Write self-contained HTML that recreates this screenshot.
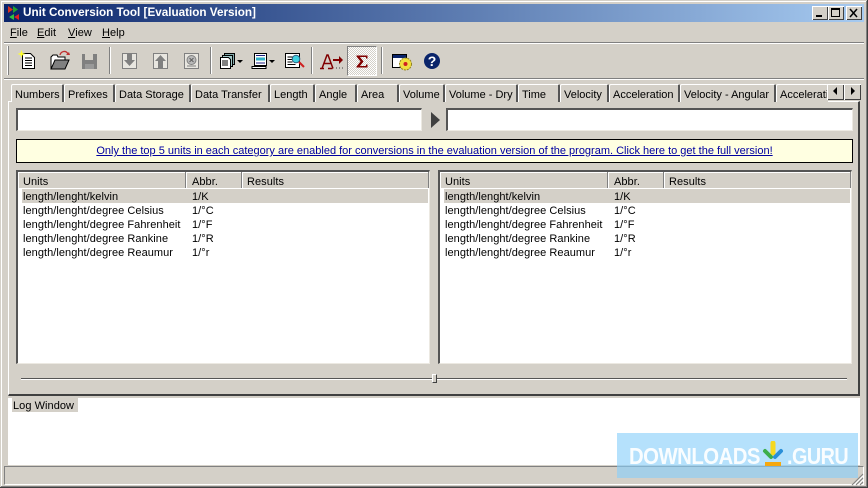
<!DOCTYPE html>
<html><head><meta charset="utf-8">
<style>
html,body{margin:0;padding:0;}
body{width:868px;height:488px;overflow:hidden;position:relative;background:#d4d0c8;font-family:"Liberation Sans",sans-serif;font-size:11px;color:#000;}
.a{position:absolute;}
.t{position:absolute;white-space:nowrap;line-height:14px;font-family:"Liberation Sans",sans-serif;font-size:11px;margin-top:1px;letter-spacing:.05px;}
.tab{position:absolute;top:84px;height:18px;border-left:1px solid #fff;border-top:1px solid #fff;border-right:2px solid #555;border-radius:2px 2px 0 0;box-sizing:border-box;background:#d4d0c8;}
.tab span{position:absolute;left:3px;top:3px;white-space:nowrap;line-height:14px;font-size:11px;}
.in{position:absolute;background:#fff;border-top:2px solid #555;border-left:2px solid #555;border-right:1px solid #ece9e2;border-bottom:1px solid #ece9e2;box-sizing:border-box;}
.sep{position:absolute;top:47px;width:1px;height:27px;background:#808080;border-right:1px solid #fff;}
.hd{position:absolute;top:172px;height:16px;background:#d4d0c8;border-right:1px solid #808080;box-shadow:inset 1px 1px 0 #fff;box-sizing:border-box;}
u{text-underline-offset:1px;}
</style></head><body>

<!-- window edge -->
<div class="a" style="left:0;top:0;width:868px;height:1px;background:#d4d0c8"></div>
<div class="a" style="left:1px;top:1px;width:866px;height:1px;background:#fff"></div>
<div class="a" style="left:867px;top:0;width:1px;height:488px;background:#404040"></div>
<div class="a" style="left:866px;top:1px;width:1px;height:486px;background:#808080"></div>
<div class="a" style="left:0;top:487px;width:868px;height:1px;background:#404040"></div>
<div class="a" style="left:1px;top:486px;width:866px;height:1px;background:#808080"></div>
<div class="a" style="left:1px;top:1px;width:1px;height:485px;background:#fff"></div>

<!-- title bar -->
<div class="a" style="left:4px;top:4px;width:860px;height:18px;background:linear-gradient(90deg,#0a246a,#a6caf0)"></div>
<svg class="a" style="left:6px;top:5px" width="16" height="16" viewBox="0 0 16 16">
<path d="M2 1l5 3.500-5 3.500z" fill="#d83020"/><path d="M8 1l5 3.500-5 3.500z" fill="#20a030" transform="translate(-1 0)"/>
<path d="M8 9l-5 3 5 3z" fill="#30c040"/><path d="M13 9l-5 3 5 3z" fill="#e02020"/>
</svg>
<div class="t" style="left:23px;top:6px;color:#fff;font-weight:bold;font-size:11.7px;letter-spacing:0;margin:0">Unit Conversion Tool [Evaluation Version]</div>
<!-- caption buttons -->
<div class="a" style="left:812px;top:6px;width:16px;height:14px;background:#d4d0c8;box-shadow:inset 1px 1px 0 #fff,inset -1px -1px 0 #404040"><div class="a" style="left:4px;top:9px;width:6px;height:2px;background:#000"></div></div>
<div class="a" style="left:828px;top:6px;width:16px;height:14px;background:#d4d0c8;box-shadow:inset 1px 1px 0 #fff,inset -1px -1px 0 #404040"><div class="a" style="left:3px;top:2px;width:9px;height:9px;border:1px solid #000;border-top-width:2px;box-sizing:border-box"></div></div>
<div class="a" style="left:846px;top:6px;width:16px;height:14px;background:#d4d0c8;box-shadow:inset 1px 1px 0 #fff,inset -1px -1px 0 #404040">
<svg class="a" style="left:3px;top:2px" width="10" height="10"><path d="M1 1l7 8M8 1l-7 8" stroke="#000" stroke-width="1.500"/></svg></div>

<!-- menu -->
<div class="t" style="left:10px;top:25px"><u>F</u>ile</div>
<div class="t" style="left:37px;top:25px"><u>E</u>dit</div>
<div class="t" style="left:68px;top:25px"><u>V</u>iew</div>
<div class="t" style="left:102px;top:25px"><u>H</u>elp</div>
<div class="a" style="left:4px;top:42px;width:860px;height:1px;background:#808080"></div>
<div class="a" style="left:4px;top:43px;width:860px;height:1px;background:#fff"></div>

<!-- toolbar -->
<div class="a" style="left:7px;top:46px;width:1px;height:29px;background:#fff"></div>
<div class="a" style="left:8px;top:46px;width:1px;height:29px;background:#808080"></div>
<div class="sep" style="left:109px"></div>
<div class="sep" style="left:210px"></div>
<div class="sep" style="left:311px"></div>
<div class="sep" style="left:381px"></div>
<div class="a" style="left:4px;top:78px;width:860px;height:1px;background:#808080"></div>
<div class="a" style="left:4px;top:79px;width:860px;height:1px;background:#fff"></div>

<!-- new -->
<svg class="a" style="left:17px;top:50px" width="20" height="20" viewBox="0 0 20 20">
<path d="M5.500 3.500h8l4 4v11h-12z" fill="#fff" stroke="#000"/><path d="M8 8h7M8 10.500h7M8 13h7M8 15.500h7" stroke="#000"/>
<path d="M4.500 0l1 3 3 1-3 1-1 3-1-3-3-1 3-1z" fill="#ffff30"/></svg>
<!-- open -->
<svg class="a" style="left:49px;top:49px" width="22" height="22" viewBox="0 0 22 22">
<path d="M2 20V8l2-2h4l1 2h7v3" fill="#fff" stroke="#000"/><path d="M2 20l4-9h14l-4 9z" fill="#808080" stroke="#000"/>
<path d="M11 6c1-4 6-5 8-1" fill="none" stroke="#c03030" stroke-width="1.300"/><path d="M17 6h4l-1-3z" fill="#c03030"/></svg>
<!-- save -->
<svg class="a" style="left:81px;top:53px" width="17" height="17" viewBox="0 0 17 17"><path d="M1 1h15v15H1z" fill="#808080"/><path d="M4 1h8v6H4z" fill="#d4d0c8"/><path d="M4 11h9v5H4z" fill="#999"/></svg>
<!-- download -->
<svg class="a" style="left:121px;top:52px" width="17" height="18" viewBox="0 0 17 18"><path d="M1.500 1.500h14v15h-14z" fill="#e8e6e0" stroke="#808080"/><path d="M6 2h5v6h3l-5.500 6L3 8h3z" fill="#808080"/></svg>
<!-- upload -->
<svg class="a" style="left:152px;top:52px" width="17" height="18" viewBox="0 0 17 18"><path d="M1.500 1.500h14v15h-14z" fill="#e8e6e0" stroke="#808080"/><path d="M6 16V9H3l5.500-6L14 9h-3v7z" fill="#808080"/></svg>
<!-- clear -->
<svg class="a" style="left:183px;top:52px" width="17" height="18" viewBox="0 0 17 18"><path d="M1.500 1.500h14v15h-14z" fill="#e8e6e0" stroke="#808080"/><circle cx="8.500" cy="8" r="4.500" fill="#bbb" stroke="#808080"/><path d="M6.500 6l4 4M10.500 6l-4 4" stroke="#606060"/><path d="M4 14h9" stroke="#808080"/></svg>
<!-- copy -->
<svg class="a" style="left:219px;top:52px" width="24" height="18" viewBox="0 0 24 18">
<path d="M5.500 1.500h10v11h-10z" stroke="#000" fill="#80a8a8"/><path d="M3.500 3.500h10v11h-10z" fill="#a0c8c8" stroke="#000"/><path d="M1.500 5.500h8l2 2v9h-10z" fill="#fff" stroke="#000"/><path d="M3 9h6M3 11h6M3 13h6" stroke="#000"/><path d="M18 8h6l-3 3z" fill="#000"/></svg>
<!-- script -->
<svg class="a" style="left:251px;top:52px" width="24" height="18" viewBox="0 0 24 18">
<path d="M3.500 1.500h12v12h-12z" fill="#fff" stroke="#000"/><path d="M5 5.500h9v3H5z" fill="#30b0c8"/><path d="M5 3.500h9M5 11h9" stroke="#202080"/><path d="M1 14.500h14v2H1z" fill="#fff" stroke="#000"/><path d="M18 8h6l-3 3z" fill="#000"/></svg>
<!-- preview -->
<svg class="a" style="left:285px;top:52px" width="20" height="18" viewBox="0 0 20 18">
<path d="M.5 1.500h14v14H.5z" fill="#fff" stroke="#000"/><path d="M2.500 5h6M2.500 7.500h5M2.500 10h5M2.500 12.500h8" stroke="#000"/>
<circle cx="11" cy="7" r="3.800" fill="#40d0e0" stroke="#306080"/><path d="M14 10l5 5" stroke="#d02020" stroke-width="2"/></svg>
<!-- A arrow -->
<svg class="a" style="left:319px;top:52px" width="25" height="18" viewBox="0 0 25 18">
<path d="M1 16.500h4M9 16.500h4.500M3 16.500L8 3h1l5 13.500M4.500 11.500h7" fill="none" stroke="#800000" stroke-width="1.500"/>
<path d="M14 7h6V4l4 4-4 4V9h-6z" fill="#800000"/><path d="M17 16h1M20 16h1M23 16h1" stroke="#404040"/></svg>
<!-- sigma button -->
<div class="a" style="left:347px;top:46px;width:30px;height:30px;box-sizing:border-box;border-top:1px solid #808080;border-left:1px solid #808080;border-right:1px solid #fff;border-bottom:1px solid #fff;background-color:#ece9e2;background-image:repeating-conic-gradient(#d4d0c8 0 25%,#fff 0 50%);background-size:2px 2px"></div>
<svg class="a" style="left:356px;top:55px" width="13" height="13" viewBox="0 0 13 13"><path d="M.5 .5h11v3h-1.500v-1.500H4l3.500 4.500L4 11h6V9.500h1.500v3H.5v-1L4.500 6.500 .5 1.500z" fill="#800000"/></svg>
<!-- options -->
<svg class="a" style="left:392px;top:53px" width="22" height="19" viewBox="0 0 22 19">
<path d="M.5 1.500h14v13H.5z" fill="#fff" stroke="#000"/><path d="M1 2h13v3H1z" fill="#0a246a"/>
<circle cx="13.500" cy="11" r="6" fill="#f0e040" stroke="#908020" stroke-dasharray="2 1"/><circle cx="13.500" cy="11" r="2" fill="#d02020"/></svg>
<!-- help -->
<svg class="a" style="left:423px;top:52px" width="18" height="18" viewBox="0 0 18 18"><circle cx="9" cy="9" r="8" fill="#0a246a"/><text x="9" y="14" font-family="Liberation Sans,sans-serif" font-size="14" font-weight="bold" fill="#fff" text-anchor="middle">?</text></svg>

<!-- tab panel -->
<div class="a" style="left:8px;top:101px;width:852px;height:295px;box-sizing:border-box;border-top:1px solid #fff;border-left:1px solid #fff;border-right:2px solid #404040;border-bottom:2px solid #404040;background:#d4d0c8"></div>
<div class="tab" style="left:11px;width:53px"><span>Numbers</span></div>
<div class="tab" style="left:64px;width:51px"><span>Prefixes</span></div>
<div class="tab" style="left:115px;width:76px"><span>Data Storage</span></div>
<div class="tab" style="left:191px;width:79px"><span>Data Transfer</span></div>
<div class="tab" style="left:270px;width:45px"><span>Length</span></div>
<div class="tab" style="left:315px;width:42px"><span>Angle</span></div>
<div class="tab" style="left:357px;width:42px"><span>Area</span></div>
<div class="tab" style="left:399px;width:46px"><span>Volume</span></div>
<div class="tab" style="left:445px;width:73px"><span>Volume - Dry</span></div>
<div class="tab" style="left:518px;width:42px"><span>Time</span></div>
<div class="tab" style="left:560px;width:49px"><span>Velocity</span></div>
<div class="tab" style="left:609px;width:71px"><span>Acceleration</span></div>
<div class="tab" style="left:680px;width:96px"><span>Velocity - Angular</span></div>
<div class="tab" style="left:776px;width:52px;overflow:hidden;border-right:0"><span>Acceleration</span></div>
<!-- scroll buttons -->
<div class="a" style="left:827px;top:84px;width:17px;height:16px;background:#d4d0c8;box-shadow:inset 1px 1px 0 #fff,inset -1px -1px 0 #404040"><svg class="a" style="left:5px;top:3px" width="6" height="9"><path d="M5 0v8L1 4z" fill="#000"/></svg></div>
<div class="a" style="left:844px;top:84px;width:17px;height:16px;background:#d4d0c8;box-shadow:inset 1px 1px 0 #fff,inset -1px -1px 0 #404040"><svg class="a" style="left:6px;top:3px" width="6" height="9"><path d="M1 0v8l4-4z" fill="#000"/></svg></div>

<!-- inputs -->
<div class="in" style="left:16px;top:108px;width:406px;height:23px"></div>
<div class="in" style="left:446px;top:108px;width:407px;height:23px"></div>
<svg class="a" style="left:430px;top:112px" width="12" height="16"><path d="M1 0l9 8-9 8z" fill="#404040"/></svg>

<!-- banner -->
<div class="a" style="left:16px;top:139px;width:837px;height:24px;box-sizing:border-box;border:1px solid #000;background:#ffffe1;text-align:center;line-height:23px;color:#0000a0;font-size:11px"><u>Only the top 5 units in each category are enabled for conversions in the evaluation version of the program. Click here to get the full version!</u></div>

<!-- left list -->
<div class="a" style="left:16px;top:170px;width:414px;height:194px;box-sizing:border-box;background:#fff;border-top:2px solid #555;border-left:2px solid #555;border-right:1px solid #ece9e2;border-bottom:1px solid #ece9e2"></div>
<div class="hd" style="left:18px;width:168px"></div>
<div class="hd" style="left:186px;width:56px"></div>
<div class="hd" style="left:242px;width:187px"></div>
<div class="t" style="left:23px;top:174px">Units</div>
<div class="t" style="left:192px;top:174px">Abbr.</div>
<div class="t" style="left:247px;top:174px">Results</div>
<div class="a" style="left:22px;top:189px;width:406px;height:14px;background:#d4d0c8"></div>
<div class="t" style="left:23px;top:189px">length/lenght/kelvin</div><div class="t" style="left:192px;top:189px">1/K</div>
<div class="t" style="left:23px;top:203px">length/lenght/degree Celsius</div><div class="t" style="left:192px;top:203px">1/°C</div>
<div class="t" style="left:23px;top:217px">length/lenght/degree Fahrenheit</div><div class="t" style="left:192px;top:217px">1/°F</div>
<div class="t" style="left:23px;top:231px">length/lenght/degree Rankine</div><div class="t" style="left:192px;top:231px">1/°R</div>
<div class="t" style="left:23px;top:245px">length/lenght/degree Reaumur</div><div class="t" style="left:192px;top:245px">1/°r</div>

<!-- right list -->
<div class="a" style="left:438px;top:170px;width:414px;height:194px;box-sizing:border-box;background:#fff;border-top:2px solid #555;border-left:2px solid #555;border-right:1px solid #ece9e2;border-bottom:1px solid #ece9e2"></div>
<div class="hd" style="left:440px;width:168px"></div>
<div class="hd" style="left:608px;width:56px"></div>
<div class="hd" style="left:664px;width:187px"></div>
<div class="t" style="left:445px;top:174px">Units</div>
<div class="t" style="left:614px;top:174px">Abbr.</div>
<div class="t" style="left:669px;top:174px">Results</div>
<div class="a" style="left:444px;top:189px;width:406px;height:14px;background:#d4d0c8"></div>
<div class="t" style="left:445px;top:189px">length/lenght/kelvin</div><div class="t" style="left:614px;top:189px">1/K</div>
<div class="t" style="left:445px;top:203px">length/lenght/degree Celsius</div><div class="t" style="left:614px;top:203px">1/°C</div>
<div class="t" style="left:445px;top:217px">length/lenght/degree Fahrenheit</div><div class="t" style="left:614px;top:217px">1/°F</div>
<div class="t" style="left:445px;top:231px">length/lenght/degree Rankine</div><div class="t" style="left:614px;top:231px">1/°R</div>
<div class="t" style="left:445px;top:245px">length/lenght/degree Reaumur</div><div class="t" style="left:614px;top:245px">1/°r</div>

<!-- slider -->
<div class="a" style="left:21px;top:378px;width:826px;height:1px;background:#555"></div>
<div class="a" style="left:21px;top:379px;width:826px;height:1px;background:#fff"></div>
<div class="a" style="left:432px;top:374px;width:5px;height:9px;box-sizing:border-box;background:#d4d0c8;border-top:1px solid #fff;border-left:1px solid #fff;border-right:1px solid #404040;border-bottom:1px solid #404040"></div>

<!-- log -->
<div class="a" style="left:8px;top:398px;width:852px;height:67px;background:#fff"></div>
<div class="a" style="left:12px;top:398px;width:66px;height:14px;background:#d4d0c8"></div>
<div class="t" style="left:13px;top:398px">Log Window</div>

<!-- status -->
<div class="a" style="left:4px;top:466px;width:860px;height:19px;box-sizing:border-box;border-top:1px solid #808080;border-left:1px solid #808080;border-bottom:1px solid #fff;border-right:1px solid #fff"></div>
<svg class="a" style="left:851px;top:473px" width="13" height="13"><path d="M12 1L1 12M12 5L5 12M12 9L9 12" stroke="#808080"/><path d="M12 3L3 12M12 7L7 12" stroke="#fff"/></svg>

<!-- watermark -->
<div class="a" style="left:617px;top:433px;width:241px;height:45px;background:rgba(135,206,250,.62)"></div>
<div class="a" style="left:629px;top:442px;white-space:nowrap;color:rgba(255,255,255,.92);font-family:'Liberation Sans',sans-serif;font-weight:bold;font-size:23px;line-height:28px;letter-spacing:-.6px;transform:scaleX(.885);transform-origin:0 0">DOWNLOADS</div>
<svg class="a" style="left:762px;top:441px" width="22" height="25" viewBox="0 0 22 25">
<path d="M11 2v10" stroke="#f5d820" stroke-width="5" stroke-linecap="round"/>
<path d="M3 10l6 6" stroke="#3cae4a" stroke-width="4" stroke-linecap="round"/>
<path d="M19 10l-6 6" stroke="#2a8fd8" stroke-width="4" stroke-linecap="round"/>
<path d="M3 23h16" stroke="#f5a810" stroke-width="4"/></svg>
<div class="a" style="left:787px;top:442px;white-space:nowrap;color:rgba(255,255,255,.92);font-family:'Liberation Sans',sans-serif;font-weight:bold;font-size:23px;line-height:28px;letter-spacing:-.6px;transform:scaleX(.86);transform-origin:0 0">.GURU</div>
</body></html>
